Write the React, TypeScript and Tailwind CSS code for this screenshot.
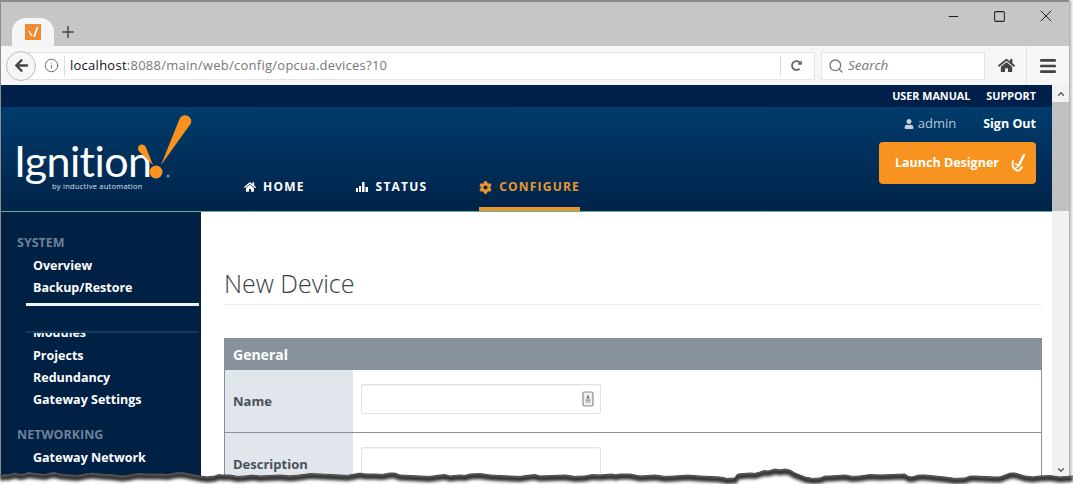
import { Search, Info, Plus, Minus, Square, X, ChevronUp, ChevronDown } from "lucide-react";
import { FaArrowLeft, FaBars, FaCog, FaHome, FaRedoAlt, FaUser } from "react-icons/fa";

// torn paper edge, y is measured from the top of the 24px strip
const tear: [number, number][] = [
  [0, 16], [8, 15], [15, 13], [24, 14], [32, 13], [40, 14], [50, 13], [60, 14], [70, 15], [85, 14], [100, 14], [115, 15],
  [130, 15], [145, 14], [160, 14], [175, 13], [190, 14], [200, 16], [215, 16], [222, 15], [230, 15], [245, 16], [260, 16],
  [280, 15], [300, 15], [320, 14], [340, 15], [355, 14], [365, 14], [375, 14], [390, 13], [400, 15], [420, 16], [440, 15],
  [450, 16], [460, 15], [470, 14], [490, 15], [510, 16], [530, 15], [540, 16], [565, 15], [585, 16], [600, 15], [612, 14],
  [620, 14], [640, 16], [655, 15], [675, 16], [700, 16], [720, 17], [735, 18], [738, 14], [750, 13], [760, 12], [768, 11],
  [775, 9], [785, 9], [795, 13], [805, 17], [820, 18], [830, 16], [845, 15], [860, 16], [880, 15], [905, 14], [912, 17],
  [925, 15], [945, 17], [965, 18], [975, 16], [995, 17], [1005, 15], [1015, 13], [1025, 16], [1040, 16], [1060, 17], [1073, 16],
];
// a little noise between the points so the edge doesn't look drawn with a ruler
const tearLine =
  "M" +
  tear
    .map(([x, y], i) => {
      const next = tear[i + 1];
      if (!next) return `${x} ${y}`;
      const mx = (x + next[0]) / 2;
      const my = (y + next[1]) / 2 + ((i * 7) % 3 - 1) * 0.9;
      return `${x} ${y} L${mx} ${my}`;
    })
    .join(" L");

function TornEdge() {
  return (
    <svg className="absolute left-0 bottom-0" width="1073" height="24" viewBox="0 0 1073 24">
      <defs>
        <filter id="tear-blur" x="-5%" y="-100%" width="110%" height="300%">
          <feGaussianBlur stdDeviation="1.8" />
        </filter>
        <clipPath id="tear-below">
          <path d={tearLine + " L1073 24 L0 24 Z"} />
        </clipPath>
      </defs>
      <path d={tearLine + " L1073 24 L0 24 Z"} fill="#ffffff" />
      <g clipPath="url(#tear-below)">
        <path d={tearLine} fill="none" stroke="#333333" strokeWidth="6" transform="translate(0 2.5)" filter="url(#tear-blur)" />
      </g>
      <path d={tearLine} fill="none" stroke="#444444" strokeWidth="1" />
    </svg>
  );
}

function Logo() {
  return (
    <div className="relative w-[180px] h-[90px] ml-[13px] mt-[8px] shrink-0">
      <span className="absolute left-0 top-[16px] text-[43px] leading-[60px] tracking-[-0.6px] text-white font-['Lato',sans-serif]">
        Ignition
      </span>
      <span className="absolute left-[38px] top-[66px] text-[7.5px] leading-[10px] tracking-[0.25px] text-[#dbe3ea] font-['Open_Sans',sans-serif] whitespace-nowrap">
        by inductive automation
      </span>
      <svg className="absolute left-[120px] top-0" width="60" height="70" viewBox="0 0 60 70">
        <path d="M27 50 L45.5 4 C47 0.5 51 -0.5 54 1 C57 2.5 58 6 56.5 9 Z" fill="#f7931e" />
        <path d="M19 50 L5.5 37 C3 34 4 31 6 30 C8.5 29 11 30 12 32.5 Z" fill="#f7931e" />
        <circle cx="22" cy="57" r="6.5" fill="#f7931e" />
        <circle cx="34" cy="61" r="1.5" fill="#7f93a8" />
      </svg>
    </div>
  );
}

function NavLink({ icon, label, active }: { icon: React.ReactNode; label: string; active?: boolean }) {
  return (
    <div className={`flex items-center gap-[7px] h-[33px] pb-[11px] border-b-4 text-[12px] font-bold tracking-[1.2px] ${active ? "ml-[1px] border-[#e8972f] text-[#e8972f]" : "border-transparent text-white"}`}>
      {icon}
      <span>{label}</span>
    </div>
  );
}

function SideHeading({ children }: { children: React.ReactNode }) {
  return <div className="ml-[16px] text-[12.5px] leading-[22px] font-bold text-[#6e8198]">{children}</div>;
}

function SideItem({ children }: { children: React.ReactNode }) {
  return <div className="ml-[32px] text-[12.5px] leading-[22px] font-bold text-white whitespace-nowrap">{children}</div>;
}

function FormRow({ label, icon, h }: { label: string; icon?: boolean; h: string }) {
  return (
    <div className={`flex ${h}`}>
      <div className="w-[128px] shrink-0 bg-[#e0e6ec] pl-[8px] pt-[2px] flex items-center text-[13px] font-bold text-[#4a5058]">{label}</div>
      <div className="flex-1 pl-[8px] pt-[14px]">
        <div className="relative w-[240px] h-[30px] rounded-[2px] border border-[#dfe4e8] shadow-[inset_0_1px_1px_rgba(0,0,0,0.05)]">
          {icon && (
            <svg className="absolute right-[6px] top-[6px]" width="12" height="16" viewBox="0 0 12 16">
              <rect x="1" y="1" width="10" height="14" rx="1.5" fill="#f0f0f0" stroke="#8a8a8a" strokeWidth="1.2" />
              <path d="M6 3.5 L7.5 7.5 H4.5 Z" fill="#666666" />
              <rect x="3.5" y="8.5" width="5" height="1.2" fill="#888888" />
              <rect x="3.5" y="10.5" width="5" height="1.2" fill="#aaaaaa" />
            </svg>
          )}
        </div>
      </div>
    </div>
  );
}

function StatusIcon() {
  return (
    <svg width="13" height="12" viewBox="0 0 13 12" fill="#ffffff">
      <rect x="0" y="7" width="2" height="4" />
      <rect x="3" y="5" width="2" height="6" />
      <rect x="6" y="1" width="2.5" height="10" />
      <rect x="9.5" y="6" width="2.5" height="5" />
    </svg>
  );
}

function DesignerIcon() {
  return (
    <svg width="16" height="22" viewBox="0 0 16 22" fill="none" stroke="#ffffff" strokeWidth="1.8" strokeLinecap="round">
      <path d="M14 2 L9 12" strokeWidth="2.4" />
      <path d="M3 8 C1.5 13 4 17 7 17.5 C9 18 11 16 12 14" />
      <path d="M5.5 11 L9 12.5 L6 15" strokeWidth="1.4" />
    </svg>
  );
}

export default function App() {
  return (
    <div className="relative w-[1073px] h-[484px] overflow-hidden bg-white font-['Open_Sans',sans-serif]">
      <div className="w-[1069px] h-[484px] border-l border-t-2 border-[#8c8c8c] shadow-[2px_0_3px_rgba(0,0,0,0.35)] flex flex-col">
        {/* tab strip */}
        <div className="h-[44px] bg-[#c6c6c6] flex items-end shrink-0">
          <div className="ml-[11px] w-[42px] h-[28px] bg-[#f5f5f5] rounded-t-[14px] flex items-center justify-center">
            <div className="w-[16px] h-[16px] bg-[#f08a30] flex items-center justify-center">
              <svg width="12" height="12" viewBox="0 0 12 12">
                <path d="M7 11 L10.5 1" stroke="#ffffff" strokeWidth="1.6" />
                <path d="M2 5 L5 10" stroke="#ffffff" strokeWidth="1.4" />
              </svg>
            </div>
          </div>
          <Plus className="ml-[5px] mb-[5px] text-[#444444]" size={18} strokeWidth={2} />
          <div className="ml-auto mb-[20px] flex items-center text-[#222222]">
            <Minus size={15} strokeWidth={1.6} />
            <Square className="ml-[32px]" size={13} strokeWidth={1.9} />
            <X className="ml-[30px] mr-[13px]" size={20} strokeWidth={1.2} />
          </div>
        </div>
        {/* toolbar */}
        <div className="h-[39px] bg-[#f6f6f6] flex items-center shrink-0">
          <div className="flex-1 h-[28px] bg-white border border-[#e4e4e4] flex items-center ml-[20px] relative">
            <div className="absolute -left-[16px] w-[30px] h-[30px] rounded-full bg-[#f6f6f6] border border-[#bdbdbd] flex items-center justify-center">
              <FaArrowLeft size={15} className="text-[#444444]" />
            </div>
            <Info size={15} strokeWidth={1.5} className="ml-[22px] text-[#666666]" />
            <div className="ml-[5px] w-px h-[20px] bg-[#dddddd]" />
            <div className="ml-[5px] text-[13px] tracking-[0.02em] text-[#777777] whitespace-nowrap">
              <span className="text-[#111111]">localhost</span>:8088/main/web/config/opcua.devices?10
            </div>
            <div className="ml-auto w-px h-[20px] bg-[#dddddd]" />
            <FaRedoAlt size={11} className="ml-[10px] mr-[12px] text-[#666666]" />
          </div>
          <div className="ml-[6px] w-[164px] h-[28px] bg-white border border-[#e4e4e4] flex items-center">
            <Search size={16} strokeWidth={2} className="ml-[6px] text-[#777777]" />
            <span className="ml-[4px] text-[13.5px] italic text-[#777777]">Search</span>
          </div>
          <FaHome size={17} className="ml-[13px] text-[#444444]" />
          <div className="ml-[11px] w-px h-[38px] bg-[#e4e4e4]" />
          <FaBars size={18} className="ml-[12px] mr-[12px] text-[#444444]" />
        </div>
        {/* page */}
        <div className="flex-1 flex min-h-0">
          <div className="flex-1 flex flex-col min-w-0">
            <div className="h-[22px] shrink-0 bg-[#00204a] flex items-center justify-end gap-[16px] pr-[16px] text-[10.8px] font-bold text-white">
              <span>USER MANUAL</span>
              <span>SUPPORT</span>
            </div>
            <div className="h-[105px] shrink-0 bg-linear-to-b from-[#003c6c] to-[#00234a] flex border-b border-[#5fae8f]">
              <div className="w-[200px] shrink-0">
                <Logo />
              </div>
              <div className="ml-[43px] flex gap-[51px] self-end">
                <NavLink icon={<FaHome size={12} />} label="HOME" />
                <NavLink icon={<StatusIcon />} label="STATUS" />
                <NavLink active icon={<FaCog size={13} />} label="CONFIGURE" />
              </div>
              <div className="ml-auto pr-[16px] pt-[7px] flex flex-col items-end">
                <div className="flex items-center h-[20px]">
                  <FaUser size={10} className="text-[#c5d2de]" />
                  <span className="ml-[4px] text-[13px] text-[#b4c6d6]">admin</span>
                  <span className="ml-[27px] text-[12.5px] font-bold text-white">Sign Out</span>
                </div>
                <div className="mt-[8px] w-[157px] h-[42px] pt-[1px] rounded-[4px] bg-[#f7931e] flex items-center justify-between pl-[16px] pr-[10px] text-[12.5px] font-bold text-white">
                  <span>Launch Designer</span>
                  <DesignerIcon />
                </div>
              </div>
            </div>
            <div className="flex-1 flex min-h-0">
              {/* sidebar */}
              <div className="w-[200px] shrink-0 bg-[#002044] pt-[20px] overflow-hidden">
                <SideHeading>SYSTEM</SideHeading>
                <div className="mt-[1px]">
                  <SideItem>Overview</SideItem>
                  <SideItem>Backup/Restore</SideItem>
                </div>
                <div className="ml-[25px] w-[173px] h-[3px] mt-[4px] bg-[#f4f4f4]" />
                <div className="ml-[25px] w-[173px] h-[2px] mt-[25px] bg-[#0b3a63] relative z-10" />
                <div className="h-[12px] overflow-hidden">
                  <div className="-mt-[11px]"><SideItem>Modules</SideItem></div>
                </div>
                <SideItem>Projects</SideItem>
                <SideItem>Redundancy</SideItem>
                <SideItem>Gateway Settings</SideItem>
                <div className="mt-[13px]"><SideHeading>NETWORKING</SideHeading></div>
                <div className="mt-[1px]">
                  <SideItem>Gateway Network</SideItem>
                  <SideItem>Web Server</SideItem>
                </div>
              </div>
              {/* main */}
              <div className="flex-1 min-w-0 pl-[23px] pr-[10px] pt-[55px] bg-white">
                <div className="pb-[4px] border-b border-[#eeeeee] text-[25px] leading-[33px] font-light text-[#3a3f45]">New Device</div>
                <div className="mt-[33px] border-x border-[#87929d]">
                  <div className="h-[32px] bg-[#87929d] pl-[8px] flex items-center text-[14px] font-bold text-white">General</div>
                  <FormRow label="Name" icon h="h-[63px] border-b border-[#87929d]" />
                  <FormRow label="Description" h="h-[62px]" />
                </div>
              </div>
            </div>
          </div>
          {/* scrollbar */}
          <div className="w-[17px] shrink-0 bg-[#f1f1f1] flex flex-col items-center">
            <div className="h-[17px] flex items-center justify-center">
              <ChevronUp size={10} strokeWidth={3} className="text-[#555555]" />
            </div>
            <div className="w-full h-[109px] bg-[#c1c1c1]" />
            <div className="mt-auto mb-[9px] relative z-10">
              <ChevronDown size={10} strokeWidth={3} className="text-[#555555]" />
            </div>
          </div>
        </div>
      </div>
      <TornEdge />
    </div>
  );
}
